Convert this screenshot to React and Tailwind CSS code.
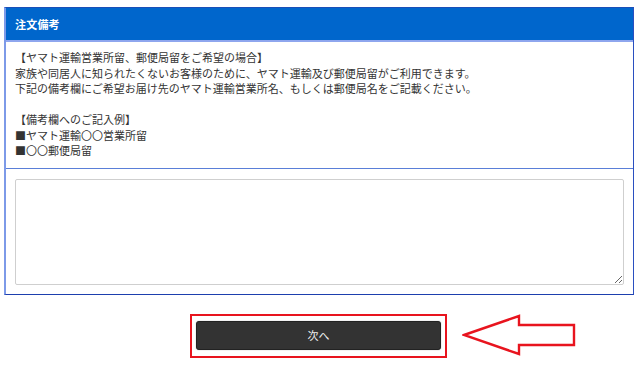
export default function App() {
  const font = { fontFamily: '"Noto Sans CJK JP", "Noto Sans", sans-serif' };
  return (
    <div className="w-[640px] h-[365px] bg-white overflow-hidden" style={font}>
      <div className="ml-[4px] mt-[7px] w-[630px] border-l-2 border-l-[#7d9ae8] border-r border-r-[#2a4fc0] border-b border-b-[#1d3fae] border-t border-t-[#1a4fb8]">
        <div className="h-[34px] bg-[#0066cc] flex items-center pl-[9px] border-b-2 border-b-[#8ea6ee]">
          <span className="text-white text-[11px] font-bold tracking-[0.2px]">注文備考</span>
        </div>
        <div className="pl-[9px] pt-[8px] pb-[9px] text-[11px] leading-[15.5px] text-[#333] border-b border-b-[#5a7fd8]">
          <p>【ヤマト運輸営業所留、郵便局留をご希望の場合】</p>
          <p>家族や同居人に知られたくないお客様のために、ヤマト運輸及び郵便局留がご利用できます。</p>
          <p>下記の備考欄にご希望お届け先のヤマト運輸営業所名、もしくは郵便局名をご記載ください。</p>
          <p>&nbsp;</p>
          <p>【備考欄へのご記入例】</p>
          <p>■ヤマト運輸〇〇営業所留</p>
          <p>■〇〇郵便局留</p>
        </div>
        <div className="pl-[9px] pr-[9px] pt-[10px] pb-[9px]">
          <textarea className="block w-full h-[106px] border border-[#cfcfcf] rounded-[2px] bg-white outline-none"></textarea>
        </div>
      </div>
      <div className="flex items-start mt-[19px] ml-[190px]">
        <div className="w-[257px] h-[44px] border-2 border-[#e8141e] pt-[5px] pl-[4px] pr-[4px]">
          <button className="w-full h-[29px] bg-[#333333] rounded-[3px] text-[#f0f0f0] text-[11px] flex items-center justify-center border border-[#222] shadow-[0_0_1px_#777]">
            次へ
          </button>
        </div>
        <svg width="120" height="44" viewBox="0 0 120 44" className="ml-[15px] mt-0">
          <polygon
            points="2,21 57,2 57,11 112,11 112,31 57,31 57,40"
            fill="white"
            stroke="#e8141e"
            strokeWidth="2.4"
            strokeLinejoin="miter"
          />
        </svg>
      </div>
    </div>
  );
}
